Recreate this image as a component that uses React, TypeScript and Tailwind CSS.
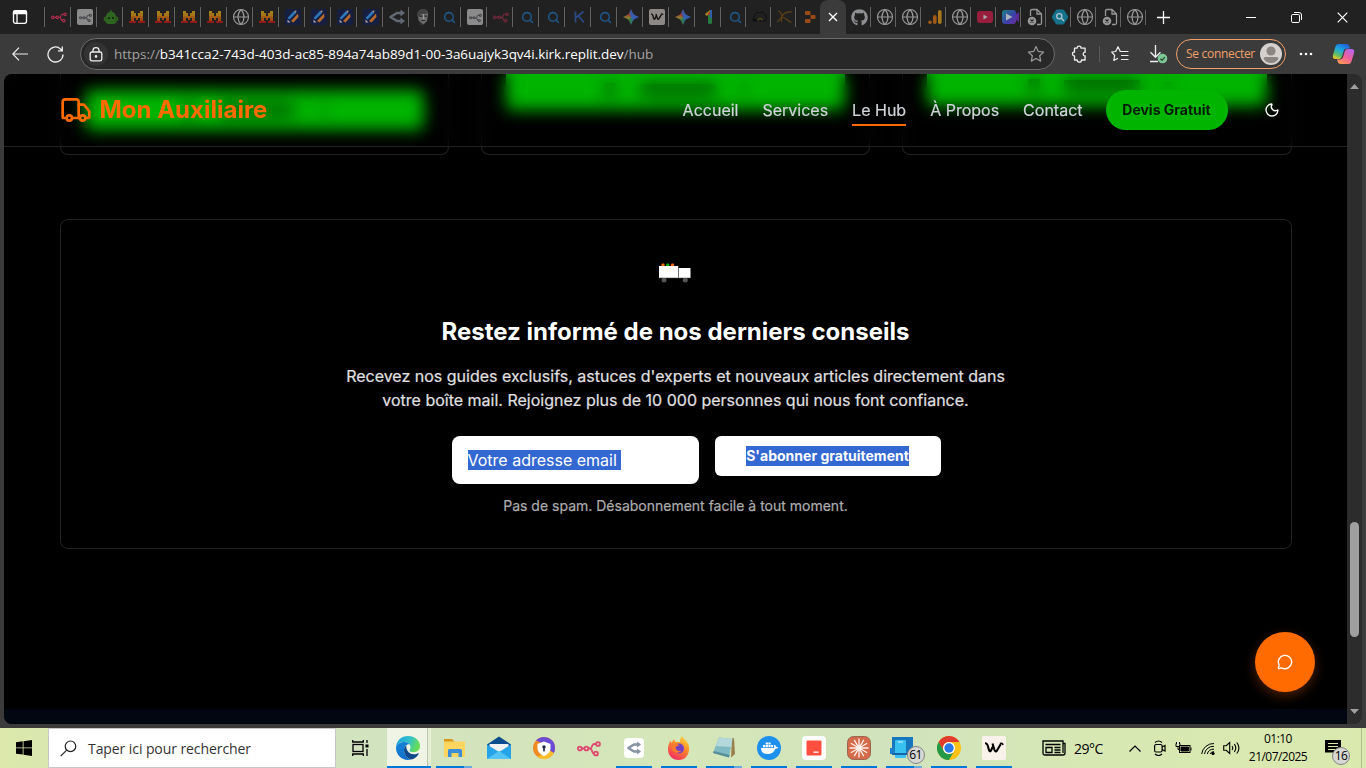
import React from "react";
import { Truck, Moon, MessageCircle, Search, Globe } from "lucide-react";
import { FaGithub } from "react-icons/fa";

/* ---------- Tab favicons ---------- */

const Nodes = ({ color, size = 16 }: { color: string; size?: number }) => (
  <svg width={size} height={size} viewBox="0 0 24 24" fill="none" stroke={color} strokeWidth="1.9">
    <circle cx="2.8" cy="12.5" r="1.9" />
    <circle cx="9.4" cy="12.5" r="1.9" />
    <circle cx="21" cy="8" r="1.9" />
    <circle cx="19" cy="17.5" r="1.9" />
    <path d="M4.7 12.5h2.8M11.3 12.5h2M13 12.5c2.500 0 1.500-4.500 4-4.500h2M13 12.500c2.500 0 1.500 5 4 5" />
  </svg>
);

const NodesTile = () => (
  <span className="flex size-4 items-center justify-center rounded-xs bg-[#8b8b8b]">
    <Nodes color="#454549" size={13} />
  </span>
);

const Robot = () => (
  <svg width="16" height="16" viewBox="0 0 16 16" fill="#2c6420">
    <path d="M7.300 3V1h1.400v2zM3 8a5 5.500 0 0 1 10 0zM0.800 8h1.500v4H0.800zM13.700 8h1.500v4h-1.500zM2.500 7h11v6.500l-2.500 1.500H5l-2.500-1.500z" />
    <path d="M5 8h2v2H5zM9 8h2v2H9z" fill="#16300f" />
  </svg>
);

const Mistral = () => (
  <svg width="16" height="16" viewBox="0 0 16 16" shapeRendering="crispEdges">
    <path d="M2 2h3v3H2zM11 2h3v3h-3z" fill="#a5811c" />
    <path d="M2 4h5v3H2zM9 4h5v3H9z" fill="#a5751a" />
    <path d="M2 7h12v2H2z" fill="#a35c14" />
    <path d="M2 9h3v3H2zM7 9h2v2H7zM11 9h3v3h-3z" fill="#a04a15" />
    <path d="M0 12h7v2H0zM9 12h7v2H9z" fill="#8f1a1a" />
  </svg>
);

const World = () => <Globe size={18} strokeWidth={1.5} color="#9a9a9a" className="-ml-px shrink-0" />;

const Stripes = () => (
  <svg width="16" height="16" viewBox="0 0 16 16">
    <rect width="16" height="16" rx="1" fill="#161f42" />
    <path d="M2.500 9 9 2l2 2-6.500 6.500z" fill="#2f76b8" />
    <path d="M6 12 13 4.500l.5 3.500L8.500 13.500z" fill="#b86a2c" />
    <path d="M2.500 10.500 5.500 13.500h-3z" fill="#a8a8b0" />
    <path d="m9 2 2.500-.5L11 4z" fill="#b89a90" />
  </svg>
);

const Fork = ({ color = "#626a75", size = 16 }: { color?: string; size?: number }) => (
  <svg width={size} height={size} viewBox="0 0 16 16" fill="none" stroke={color} strokeWidth="2.600">
    <path d="M12.500 4H8L1.500 8 8 12h4.500" strokeLinejoin="round" />
    <path d="m11.500 0.600 4.500 3.400-4.500 3.400zM11.500 8.600l4.500 3.400-4.500 3.400z" fill={color} stroke="none" />
  </svg>
);

const Face = () => (
  <svg width="16" height="16" viewBox="0 0 16 16">
    <path d="M2.500 6c0-3.500 2-5.500 5.500-5.500S13.500 2.500 13 6l-1 6-3.500 3.500L4 12.500z" fill="#6d6d6d" />
    <path d="M2.500 7V3L6 .5h4L13 4l-2 1H6L4 8z" fill="#424242" />
    <path d="M4.500 6.500h3v1.300h-3zM9 6.500h3v1.300H9zM6.500 11h3.500v1H6.500z" fill="#272727" />
    <path d="M8 5h1l.5 5H8z" fill="#9c9c9c" />
    <path d="M4 11.500 8.500 16H5z" fill="#333" />
  </svg>
);

const Find = () => <Search size={13} strokeWidth={2.800} color="#1d5688" className="ml-0.5" />;

const LetterK = () => (
  <svg width="16" height="16" viewBox="0 0 16 16" fill="none" stroke="#2b4a86" strokeWidth="1.700">
    <path d="M4.500 2.500v11M12.500 2.500 4.500 9M7.500 7l5.500 6.500" />
  </svg>
);

const Spark = () => (
  <span className="size-4 bg-[conic-gradient(#3b5aa6_0deg,#345fb4_120deg,#2f7a4f_190deg,#8a7a2c_260deg,#a03a38_320deg,#3b5aa6_360deg)] [clip-path:polygon(50%_0,62%_27%,73%_38%,100%_50%,73%_62%,62%_73%,50%_100%,38%_73%,27%_62%,0_50%,27%_38%,38%_27%)]" />
);

const Zigzag = ({ size = 16 }: { size?: number }) => (
  <svg width={size} height={size} viewBox="0 0 24 24" fill="none" stroke="currentColor">
    <path d="M3 7.300c1.800 0 2.200.7 2.700 2.200l1.300 4.500c.5 1.700 1.300 1.700 2 .5l2.200-4.500" strokeWidth="2.100" />
    <path d="m10.500 7.500 2 6.500c.6 1.700 1.600 1.700 2.500.5l3.800-6.500" strokeWidth="2.100" />
    <path d="M18 7.500q2.500-1 3 1.500" strokeWidth="1.600" />
  </svg>
);

const ZigzagTile = () => (
  <span className="flex size-4 items-center justify-center rounded-xs bg-[#8d8986] text-[#111]">
    <Zigzag size={16} />
  </span>
);

const DigitOne = () => (
  <svg width="16" height="16" viewBox="0 0 16 16">
    <path d="M4 5 9 1l1 3.500L5.500 7z" fill="#a8821b" />
    <path d="M7 4.500 10.500 1v7H7z" fill="#9b352c" />
    <path d="M7 6h4v7.500q0 1.500-2 1.500t-2-1.500z" fill="#277a3e" />
    <path d="M9 1h2v8H9z" fill="#315ea8" />
  </svg>
);

const Helmet = () => (
  <svg width="16" height="16" viewBox="0 0 16 16" fill="none" stroke="#111">
    <path d="m1 10 3-6 7-1 3 4v5H8" />
    <path d="M1 10h4v2H1z" fill="#111" />
    <path d="m5 11 3-1.500 2 .5v1.500" stroke="#5b5315" />
  </svg>
);

const Arcs = () => (
  <svg width="16" height="16" viewBox="0 0 16 16" fill="none" stroke="#5e4315" strokeWidth="1.200">
    <path d="M1 2c4 1 5 5 3 11M15 3C9 2 6 5 4.500 8c4 0 5.500 4 10 5.500M0 13 5 8" />
  </svg>
);

const Replit = ({ color = "#9a4a17" }) => (
  <svg width="16" height="16" viewBox="0 0 16 16" fill={color}>
    <rect x="3" y="2" width="5.500" height="4" rx=".8" />
    <rect x="8.500" y="6" width="5" height="4" rx=".8" />
    <rect x="3" y="10" width="5.500" height="4" rx=".8" />
  </svg>
);

const Analytics = () => (
  <svg width="16" height="16" viewBox="0 0 16 16">
    <rect x="11" y="1" width="3.600" height="14" rx="1.800" fill="#a8771a" />
    <rect x="6" y="6" width="3.600" height="9" rx="1.800" fill="#a05a15" />
    <circle cx="3" cy="13.200" r="1.800" fill="#a05a15" />
  </svg>
);

const Video = () => (
  <svg width="16" height="16" viewBox="0 0 16 16">
    <rect y="2" width="16" height="12" rx="3" fill="#971e3c" />
    <path d="M6.500 5.500v5l4-2.500z" fill="#aaa" />
  </svg>
);

const Camera = () => (
  <svg width="17" height="16" viewBox="0 0 17 16">
    <defs>
      <linearGradient id="cam" x2="1" y2="1">
        <stop stopColor="#1c8187" />
        <stop offset=".6" stopColor="#3c3fa8" />
        <stop offset="1" stopColor="#6f2da0" />
      </linearGradient>
    </defs>
    <path d="m11 7 6-4v10l-6-4z" fill="#5a2a96" />
    <rect y="1" width="14" height="14" rx="3" fill="url(#cam)" />
    <path d="M4 4.500v7L10.500 8z" fill="#a9b4bd" />
  </svg>
);

const BrokenPage = () => (
  <svg width="16" height="18" viewBox="0 0 16 18" fill="none" stroke="#979797" strokeWidth="1.300">
    <path d="M3.500 8V3q0-1.500 1.500-1.500h5L14.500 6v9q0 1.500-1.500 1.500h-3M10 1.500V6h4.500" />
    <circle cx="5" cy="13" r="4.300" fill="#979797" stroke="none" />
    <path d="m3.500 11.500 3 3m0-3-3 3" stroke="#222" strokeWidth="1.100" />
  </svg>
);

const HexFind = () => (
  <svg width="16" height="16" viewBox="0 0 16 16">
    <path d="M4.500 1h7L16 8l-4.500 7h-7L0 8z" fill="#16728c" stroke="#16728c" strokeLinejoin="round" />
    <circle cx="7.300" cy="7.300" r="2.600" fill="none" stroke="#b0c4ca" strokeWidth="1.300" />
    <path d="m9.300 9.300 2.700 2.700" stroke="#b0c4ca" strokeWidth="1.400" />
  </svg>
);

const wideTabs: React.ReactNode[] = [
  <Nodes color="#a62d4c" />, <NodesTile />, <Robot />, <Mistral />, <Mistral />, <Mistral />, <Mistral />,
  <World />, <Mistral />, <Stripes />, <Stripes />, <Stripes />, <Stripes />, <Fork />, <Face />, <Find />,
  <NodesTile />, <Nodes color="#70283a" />, <Find />, <Find />, <LetterK />, <Find />, <Spark />,
  <ZigzagTile />, <Spark />, <DigitOne />,
];
const narrowTabs: React.ReactNode[] = [<Find />, <Helmet />, <Arcs />, <Replit />];
const rightTabs: React.ReactNode[] = [
  <World />, <World />, <Analytics />, <World />, <Video />, <Camera />, <BrokenPage />, <HexFind />,
  <World />, <BrokenPage />, <World />,
];

function Tab({ wide, children }: { wide?: boolean; children: React.ReactNode }) {
  return (
    <div className={wide ? "flex h-5 w-[26px] shrink-0 items-center border-l border-[#626262] pl-1.5" : "flex h-5 w-[25px] shrink-0 items-center border-l border-[#626262] pl-1.5"}>
      {children}
    </div>
  );
}

function TabStrip() {
  return (
    <div className="flex h-[34px] items-center bg-[#212121] text-white">
      <div className="flex w-11 shrink-0 pl-3">
        <svg width="16" height="16" viewBox="0 0 16 16" fill="none" stroke="white" strokeWidth="1.300">
          <rect x="1.500" y="1.700" width="13" height="12.600" rx="2" />
          <path d="M1.500 4.500V3.500q0-1.800 1.800-1.800h9.400q1.800 0 1.800 1.800v1z" fill="white" />
          <path d="M5 4.500v9.500" />
        </svg>
      </div>
      {wideTabs.map((t, i) => <Tab wide key={i}>{t}</Tab>)}
      {narrowTabs.map((t, i) => <Tab key={i}>{t}</Tab>)}
      <div className="flex h-[34px] w-[26px] shrink-0 items-center justify-center rounded-t-lg bg-[#3b3b3b]">
        <svg width="10" height="10" viewBox="0 0 10 10" stroke="white" strokeWidth="1.400"><path d="m1 1 8 8m0-8L1 9" /></svg>
      </div>
      <div className="flex w-6 shrink-0 pl-[5px]"><FaGithub size={17} color="#8d8f92" /></div>
      {rightTabs.map((t, i) => <Tab key={i}>{t}</Tab>)}
      <div className="flex flex-1 items-center justify-between border-l border-[#626262] pr-[18px] pl-[10px]">
        <svg width="15" height="15" viewBox="0 0 15 15" stroke="white" strokeWidth="1.300"><path d="M7.500 1v13M1 7.500h13" /></svg>
        <div className="flex items-center gap-[35px]">
          <svg width="10" height="10" viewBox="0 0 10 10" stroke="white"><path d="M0 5.500h10" /></svg>
          <svg width="11" height="11" viewBox="0 0 11 11" fill="none" stroke="white"><rect x=".5" y="2.500" width="8" height="8" rx="1.300" /><path d="M3 .5h5q2.500 0 2.500 2.500v5" /></svg>
          <svg width="11" height="11" viewBox="0 0 11 11" stroke="white" strokeWidth="1.200"><path d="m.7.700 9.600 9.600m0-9.600L.7 10.300" /></svg>
        </div>
      </div>
    </div>
  );
}

function Toolbar() {
  return (
    <div className="flex h-10 items-center bg-[#3b3b3b] text-white">
      <div className="flex w-20 shrink-0 items-center gap-[19px] pl-3">
        <svg width="16" height="14" viewBox="0 0 16 14" fill="none" stroke="#eee" strokeWidth="1.200"><path d="M7 .7.800 7 7 13.300M1 7h15" /></svg>
        <svg width="17" height="17" viewBox="0 0 17 17" fill="none" stroke="#eee" strokeWidth="1.300"><path d="M16 8.500a7.500 7.500 0 1 1-2.500-5.600L15 4.300M15.300.5v4.300H11" /></svg>
      </div>
      <div className="flex h-8 w-[975px] shrink-0 items-center rounded-full border border-[#6b6b6b] bg-[#282828]">
        <div className="ml-[3px] flex size-6 items-center justify-center rounded-full bg-[#333]">
          <svg width="14" height="15" viewBox="0 0 14 15" fill="none" stroke="#eee" strokeWidth="1.300"><rect x="1.200" y="5" width="11.600" height="8.800" rx="1.700" /><path d="M4 5V3.500a3 2.800 0 0 1 6 0V5" /><circle cx="7" cy="9.400" r=".7" fill="#eee" /></svg>
        </div>
        <div className="ml-1.5 flex-1 font-['Open_Sans','Noto_Sans',sans-serif] text-[13.5px] tracking-[-0.030px] whitespace-nowrap text-[#a3a3a3]">
          https://<span className="text-white">b341cca2-743d-403d-ac85-894a74ab89d1-00-3a6uajyk3qv4i.kirk.replit.dev</span>/hub
        </div>
        <svg className="mr-[9px]" width="18" height="18" viewBox="0 0 18 18" fill="none" stroke="#9a9a9a" strokeWidth="1.200"><path d="m9 1.500 2.300 4.900 5.300.700-3.900 3.700 1 5.300L9 13.500l-4.700 2.600 1-5.300L1.400 7.100l5.300-.7z" strokeLinejoin="round" /></svg>
      </div>
      <div className="flex flex-1 items-center">
        <svg className="ml-4" width="17" height="18" viewBox="0 0 17 18" fill="none" stroke="#eee" strokeWidth="1.300"><path d="M3.500 3.200h2.600a2 2 0 0 1 4 0h4v4a1.800 1.800 0 1 0 0 3.800v4h-3.600a2 2 0 0 1-4.400 0H3.500V11a2 2 0 0 1 0-4z" strokeLinejoin="round" /></svg>
        <div className="ml-[11px] h-4 w-px bg-[#5d5d5d]" />
        <svg className="ml-[11px]" width="18" height="18" viewBox="0 0 18 18" fill="none" stroke="#eee" strokeWidth="1.200"><path d="M11 6.500H9.300L7 1.700 4.700 6.500l-4 .5 3 3.300-.9 5.200L7 13.200M11 6.500h6.500M10 10.500h7.500M10 14.500h7.500" strokeLinejoin="round" /></svg>
        <svg className="ml-5" width="19" height="20" viewBox="0 0 19 20" fill="none" stroke="#eee" strokeWidth="1.300"><path d="M6.500 1v12M1.500 8.300l5 5 5-5M1 17.500h8" /><circle cx="13.500" cy="14.500" r="4.800" fill="#7cc795" stroke="none" /><path d="m11.300 14.700 1.700 1.700 2.800-3.300" stroke="#26492f" /></svg>
        <div className="ml-[8px] flex h-[30px] w-[110px] items-center justify-between rounded-full border border-[#f2a169] pr-[3px] pl-[9px]">
          <span className="font-['Open_Sans','Noto_Sans',sans-serif] text-[12px] tracking-[-0.300px] whitespace-nowrap text-[#f2a169]">Se connecter</span>
          <svg width="22" height="22" viewBox="0 0 22 22"><circle cx="11" cy="11" r="11" fill="#d5d1ce" /><circle cx="11" cy="8" r="4.600" fill="#8c8683" /><path d="M3.500 15.500q0-1.500 2-1.500h11q2 0 2 1.500c-1 2.500-4 4.500-7.500 4.500s-6.500-2-7.500-4.500" fill="#8c8683" /></svg>
        </div>
        <svg className="ml-[13px]" width="14" height="4" viewBox="0 0 14 4" fill="white"><circle cx="2" cy="2" r="1.300" /><circle cx="7" cy="2" r="1.300" /><circle cx="12" cy="2" r="1.300" /></svg>
        <svg className="ml-[19px]" width="23" height="22" viewBox="0 0 23 22">
          <defs>
            <linearGradient id="cpa" x1=".7" x2=".2" y2="1"><stop stopColor="#2262dc" /><stop offset=".4" stopColor="#19a9e4" /><stop offset=".75" stopColor="#5bbc66" /><stop offset="1" stopColor="#f1c62a" /></linearGradient>
            <linearGradient id="cpb" x1=".8" x2=".2" y2="1"><stop stopColor="#b765ee" /><stop offset=".5" stopColor="#ee5f9c" /><stop offset="1" stopColor="#ff9a50" /></linearGradient>
          </defs>
          <path d="M6.500 1h8q2 0 2.700 2l.8 2.500h-3.500q-2 0-2.700 2l-2 6.500q-.7 2-2.500 2H3.500Q0 16 1 12l2.500-8.500Q4.300 1 6.500 1" fill="url(#cpa)" />
          <path d="M15.500 6h4q3.500 0 2.500 4l-2.500 8.500Q18.700 21 16.500 21h-8q-2 0-2.700-2L5 16.500h3.200q2 0 2.700-2l2-6.500q.7-2 2.600-2" fill="url(#cpb)" />
        </svg>
      </div>
    </div>
  );
}

/* ---------- Web page ---------- */

const cards = [
  { offset: "mt-4", lead: "ml-[98px]" },
  { offset: "-mt-1", lead: "ml-[98px]" },
  { offset: "-mt-2", lead: "ml-[101px]" },
];

function Site() {
  return (
    <div className="relative flex-1 overflow-hidden rounded-l-lg bg-black font-['Inter',sans-serif] text-white">
      <div className="mx-auto grid h-[81px] max-w-7xl grid-cols-3 gap-8 px-6">
        {cards.map((c, i) => (
          <div key={i} className="flex items-start rounded-b-lg border border-t-0 border-[#222] px-6">
            <div className={`flex h-10 w-full items-center rounded-md bg-[#00b400] ${c.offset}`}>
              <span className={`h-3.5 w-3 bg-black/40 ${c.lead}`} />
              <span className="ml-6 h-3 w-[76px] bg-black/50" />
              <span className="ml-6 h-2 w-2 bg-black/30" />
            </div>
          </div>
        ))}
      </div>

      <header className="absolute inset-x-0 top-0 border-b border-[#222] backdrop-blur-[8px]">
        <div className="mx-auto flex h-[72px] max-w-7xl items-center justify-between px-6">
          <div className="flex items-center gap-2 text-[#ff6b00]">
            <Truck size={32} />
            <span className="text-2xl font-bold whitespace-nowrap">Mon Auxiliaire</span>
          </div>
          <nav className="flex items-center gap-6 whitespace-nowrap text-[#d1d5db] [-webkit-text-stroke:0.2px]">
            <span>Accueil</span>
            <span>Services</span>
            <span className="relative">Le Hub<i className="absolute inset-x-0 -bottom-1 h-0.5 bg-[#ff6b00]" /></span>
            <span>À Propos</span>
            <span>Contact</span>
            <span className="-ml-px flex h-10 w-[122px] items-center justify-center rounded-full bg-[#00b400] text-sm font-bold text-[#031c03] [-webkit-text-stroke:0]">Devis Gratuit</span>
            <span className="flex size-10 items-center justify-center text-white"><Moon size={16} /></span>
          </nav>
        </div>
      </header>

      <div className="mx-auto mt-16 max-w-7xl px-6">
        <section className="flex h-[330px] flex-col items-center rounded-lg border border-[#222] pt-8">
          <svg width="48" height="48" viewBox="0 0 48 48">
            <rect x="9.500" y="11.500" width="3" height="3" rx="1" fill="#ff6b00" />
            <rect x="14.200" y="11.500" width="3" height="3" rx="1" fill="#00b400" />
            <rect x="19" y="11.500" width="3" height="3" rx="1" fill="#ff6b00" />
            <circle cx="12" cy="28" r="2.500" fill="#555" />
            <circle cx="33.300" cy="28" r="2.500" fill="#555" />
            <rect x="7" y="25" width="31.500" height="1.200" fill="#555" />
            <rect x="7" y="14" width="19.200" height="11.700" fill="#fff" />
            <rect x="26.700" y="16" width="11.800" height="9.700" fill="#fff" />
          </svg>
          <h2 className="mt-4 text-2xl font-bold">Restez informé de nos derniers conseils</h2>
          <p className="mt-4 text-center whitespace-nowrap text-[#e0e0e0] [-webkit-text-stroke:0.2px]">
            Recevez nos guides exclusifs, astuces d'experts et nouveaux articles directement dans
            <br />
            votre boîte mail. Rejoignez plus de 10 000 personnes qui nous font confiance.
          </p>
          <div className="mt-6 flex w-[448px] items-start gap-4">
            <div className="flex h-12 w-[247px] shrink-0 items-center rounded-lg bg-white pl-4">
              <span className="h-5 w-[153px] bg-[#3367d1] leading-5 whitespace-nowrap">Votre adresse email</span>
            </div>
            <div className="flex h-10 w-[226px] shrink-0 items-center justify-center rounded-md bg-white">
              <span className="h-5 bg-[#3367d1] text-sm font-bold whitespace-nowrap">S'abonner gratuitement</span>
            </div>
          </div>
          <p className="mt-3 text-sm text-[#adadad] [-webkit-text-stroke:0.2px]">Pas de spam. Désabonnement facile à tout moment.</p>
        </section>
      </div>
      <div className="mt-40 h-4 bg-[#020610]" />

      <div className="absolute right-8 bottom-8 flex size-[60px] items-center justify-center rounded-full bg-[#ff6b00] shadow-[0_4px_12px_rgba(255,107,0,0.3)]">
        <MessageCircle size={16} />
      </div>
    </div>
  );
}

function Scrollbar() {
  return (
    <div className="flex w-[15px] flex-col items-center rounded-r-lg bg-[#2c2c2c]">
      <svg className="mt-[10px]" width="9" height="5" viewBox="0 0 9 5" fill="#9f9f9f"><path d="M0 5 4.500 0 9 5z" /></svg>
      <div className="mt-[433px] h-[115px] w-[9px] rounded-full bg-[#9f9f9f]" />
      <svg className="mt-[72px]" width="9" height="5" viewBox="0 0 9 5" fill="#9f9f9f"><path d="m0 0 4.500 5L9 0z" /></svg>
    </div>
  );
}

/* ---------- Taskbar ---------- */

const Edge = () => (
  <svg width="24" height="24" viewBox="0 0 24 24">
    <defs>
      <linearGradient id="e1" x2="1" y2=".3"><stop stopColor="#1a9be0" /><stop offset=".6" stopColor="#33c3c8" /><stop offset="1" stopColor="#67dd55" /></linearGradient>
      <linearGradient id="e2" x2=".6" y2="1"><stop stopColor="#1686d8" /><stop offset="1" stopColor="#1170cc" /></linearGradient>
    </defs>
    <path d="M0 11C.5 4.500 5.500 0 12 0c7 0 12 4.500 12 10 0 4-3 6.200-6.500 6.200-2.800 0-4-1-4-2 0-.8 1-1.200 1-3C14.500 8.500 12 6 8.500 6 4.500 6 1 8 0 11" fill="url(#e1)" />
    <path d="M0 12c0-3.500 4-6 8.500-6 2.500 0 4.300 1 5.200 2.300C10.500 8 8 10.500 8 14c0 4.500 3 8.500 7 9.600-1 .3-2 .4-3 .4C5.500 24 0 18.500 0 12" fill="url(#e2)" />
    <path d="M8 14c0-2 1-3.800 2.500-4.800-.8 4.300 2 9 7.500 9 2 0 3.300-.6 4.300-1 .4-.1.700.2.500.6C21 21 18 23.400 15 23.600 11 22.500 8 18.500 8 14" fill="#114a8b" />
  </svg>
);

const Explorer = () => (
  <svg width="24" height="24" viewBox="0 0 24 24">
    <path d="M2 3h8l2 2v3H2z" fill="#d99a1c" />
    <path d="M2 5.500h21V21H2z" fill="#ffd560" />
    <path d="M6 21v-6.500q0-1.500 1.500-1.500h11q1.500 0 1.500 1.500V21h-3.500v-4h-7v4z" fill="#3a8dd6" />
  </svg>
);

const Mail = () => (
  <svg width="24" height="24" viewBox="0 0 24 24">
    <path d="M0 8.500 12 .500l12 8V12H0z" fill="#0c4c8c" />
    <path d="M2.500 8h19v7h-19z" fill="#f2f2f2" />
    <path d="M0 8.500 12 16 24 8.500V23H0z" fill="#27a4e8" />
    <path d="m0 23 12-8 12 8z" fill="#54c4f5" />
  </svg>
);

const Shield = () => (
  <svg width="24" height="24" viewBox="0 0 24 24">
    <circle cx="12" cy="12" r="11" fill="#f28a22" />
    <path d="M4 4.500A11 11 0 0 1 23 12c0 2-.5 4-1.500 5.500L12 8z" fill="#6b4cd6" />
    <path d="M5 20.500A11 11 0 0 0 22 17l-4-2-8 4z" fill="#fcbf2d" />
    <path d="M12 5.500 18.500 8v4c0 4-3 6.500-6.500 8-3.500-1.500-6.500-4-6.500-8V8z" fill="#fff" />
    <circle cx="12" cy="11" r="1.700" fill="#222846" />
    <path d="M11.200 11h1.600v4.500h-1.600z" fill="#222846" />
  </svg>
);

const ForkTile = () => (
  <span className="flex size-5 items-center justify-center rounded-sm bg-white"><Fork color="#8492a4" size={14} /></span>
);

const Firefox = () => (
  <svg width="24" height="24" viewBox="0 0 24 24">
    <defs><linearGradient id="ff" x1=".8" x2=".3" y2="1"><stop stopColor="#ffdc3c" /><stop offset=".45" stopColor="#ff8a2a" /><stop offset="1" stopColor="#f02c65" /></linearGradient></defs>
    <path d="M15 0c.5 2 4 4 6 7.500 3 5 .5 16.500-9 16.500C5 24 1 19 1 13.500c0-4 1-6.500 2.500-9l1 2.500L7 3l1.500 3L13 6c0-3 1-5 2-6" fill="url(#ff)" />
    <circle cx="12" cy="12.500" r="5" fill="#7340c4" />
    <path d="M4.500 8.500c3-2 6-1 8 1-2 0-2 1-4 1.500 0 3 3 5 6 3.500-1.500 3-8 3-9.500-1z" fill="#ff7a2c" />
  </svg>
);

const Notepad = () => (
  <svg width="24" height="24" viewBox="0 0 24 24">
    <path d="m20 2 2 .500L23 18l-4 3.500z" fill="#9a7f4e" />
    <path d="M7 1.500 20.500 3 17 21.500 1 17z" fill="#7fb9c2" />
    <path d="M7 1.500 20.500 3 19 11 4 10z" fill="#b4d9dc" />
    <path d="m1 17 16 4.500.500-2.500L1.800 15z" fill="#568e98" />
  </svg>
);

const Docker = () => (
  <svg width="24" height="24" viewBox="0 0 24 24">
    <circle cx="12" cy="12" r="12" fill="#1d90ee" />
    <path d="M4 12h13c.3-1 .2-1.800-.2-2.500l.8-.7c1 .7 1.200 1.300 1.300 2 1-.2 1.800 0 2.300.4-.5 1.200-1.500 1.500-2.700 1.500-1.500 3.500-4 5.300-8 5.300-4.300 0-6.500-2-6.500-6" fill="#fff" />
    <path d="M6 9h2.200v2.200H6zM8.700 9h2.200v2.200H8.700zM11.400 9h2.200v2.200h-2.200zM14.100 9h1.900v2.200h-1.900zM8.700 6.500h2.200v2.100H8.700zM11.400 6.500h2.200v2.100h-2.200z" fill="#fff" />
  </svg>
);

const RedTile = () => (
  <svg width="24" height="24" viewBox="0 0 24 24"><rect width="24" height="24" rx="4" fill="#fff" /><rect x="4.500" y="4.500" width="15" height="15" rx="1" fill="#ff4f3e" /><path d="M11.500 15.500h5v1.300h-5z" fill="#fff" /></svg>
);

const Burst = () => (
  <svg width="24" height="24" viewBox="0 0 24 24">
    <rect x=".5" y=".5" width="23" height="23" rx="6" fill="#d66b4c" stroke="#9a6650" />
    <path d="M12 2.500v19M2.500 12h19M7.200 3.800l9.600 16.400M16.800 3.800 7.200 20.200M3.800 7.200l16.400 9.600M3.800 16.800l16.400-9.600" stroke="#fff1e8" strokeWidth="1.300" />
  </svg>
);

const Count = ({ n }: { n: string }) => (
  <span className="absolute flex size-[18px] items-center justify-center rounded-full border border-[#848484] bg-[#d7d7d3] font-['Open_Sans','Noto_Sans',sans-serif] text-[12px] font-medium tracking-[-0.600px] text-black">{n}</span>
);

const Phone = () => (
  <span className="relative -ml-1 flex size-6">
    <svg width="24" height="24" viewBox="0 0 24 24"><path d="M2 1h21v16H2z" fill="#1676be" /><path d="M0 12h5v6H0z" fill="#1b80c7" /><rect x="5" y="4" width="11" height="18" rx="1" fill="#36c1f1" /><path d="M2 17h18v2H2z" fill="#1764a8" /><path d="M8 6h5" stroke="#d6f5ff" /></svg>
    <span className="absolute top-2.5 left-[17px]"><Count n="61" /></span>
  </span>
);

const Chrome = () => (
  <svg width="24" height="24" viewBox="0 0 24 24">
    <circle cx="12" cy="12" r="12" fill="#fbc116" />
    <path d="M1.600 6A12 12 0 0 1 22.400 6H12a6 6 0 0 0-5.200 9z" fill="#e33b2e" />
    <path d="M1.600 6A12 12 0 0 0 12 24l5.200-9a6 6 0 0 1-10.400 0z" fill="#249a48" />
    <circle cx="12" cy="12" r="6" fill="#fff" />
    <circle cx="12" cy="12" r="4.700" fill="#2a78e8" />
  </svg>
);

const W = () => (
  <span className="flex size-6 items-center justify-center rounded-xs bg-[#f9f2ea] text-black"><Zigzag size={24} /></span>
);

const apps: { icon: React.ReactNode; bar: boolean; multi?: boolean }[] = [
  { icon: <Explorer />, bar: true, multi: true },
  { icon: <Mail />, bar: false },
  { icon: <Shield />, bar: false },
  { icon: <Nodes color="#dd4b70" size={24} />, bar: false },
  { icon: <ForkTile />, bar: true },
  { icon: <Firefox />, bar: true },
  { icon: <Notepad />, bar: true, multi: true },
  { icon: <Docker />, bar: true },
  { icon: <RedTile />, bar: true },
  { icon: <Burst />, bar: true },
  { icon: <Phone />, bar: true, multi: true },
  { icon: <Chrome />, bar: true },
  { icon: <W />, bar: true },
];

function Taskbar() {
  return (
    <div className="flex h-10 bg-[linear-gradient(90deg,#dce8ab_0%,#d7e6b4_8%,#d2e3c0_26%,#d5e6b8_50%,#d1e3bd_66%,#d7e8b3_80%,#dae9ae_100%)] font-['Open_Sans','Noto_Sans',sans-serif] text-black">
      <div className="flex w-12 shrink-0 items-center justify-center">
        <svg width="16" height="16" viewBox="0 0 16 16"><path d="M0 2.300 6.700 1.300v6.200H0zM7.500 1.200 16 0v7.500H7.500zM0 8.300h6.700v6.300L0 13.700zM7.500 8.300H16V16l-8.500-1.200z" /></svg>
      </div>
      <div className="flex w-[288px] shrink-0 items-center border border-[#c4c7c4] bg-white pl-[11px]">
        <svg width="17" height="17" viewBox="0 0 17 17" fill="none" stroke="#222" strokeWidth="1.200"><circle cx="10.500" cy="6.300" r="5.300" /><path d="M6.700 10.200.7 16.200" /></svg>
        <span className="ml-[11px] text-[14px] tracking-[-0.080px] whitespace-nowrap text-[#333]">Taper ici pour rechercher</span>
      </div>
      <div className="flex w-[51px] shrink-0 items-center pl-4">
        <svg width="17" height="16" viewBox="0 0 17 16" fill="none" stroke="black" strokeWidth="1.300"><rect x="1" y="4.500" width="10" height="7" /><path d="M.7 0v2h10.600V0M.7 16v-2h10.600v2M15 0v3M15 9v7" /><path d="M13.500 4.500h3v3h-3z" fill="black" stroke="none" /></svg>
      </div>
      <div className="flex w-11 shrink-0 flex-col border-b-2 border-[#0078d7]">
        <div className="flex h-[38px]">
          <div className="flex w-[41px] items-center justify-center border-r border-[#bbc8ab] bg-[#f0f4e5] pt-0.5 pl-0.5"><Edge /></div>
          <div className="w-[3px] bg-[#e5edd6]" />
        </div>
      </div>
      {apps.map((a, i) => (
        <div key={i} className="flex w-[45px] shrink-0 flex-col items-center">
          <div className="flex h-[38px] items-center pt-0.5">{a.icon}</div>
          {a.bar && (
            <div className="flex h-0.5 w-9 bg-[#0078d7]">
              {a.multi && <div className="ml-auto w-2 bg-[#69a9db]" />}
            </div>
          )}
        </div>
      ))}
      <div className="flex flex-1 items-center">
        <svg className="ml-[26px] shrink-0" width="24" height="16" viewBox="0 0 24 16" fill="none" stroke="black" strokeWidth="1.300"><path d="M21 3.500h2v9.500q0 2-2 2H3q-2 0-2-2V1h20v12" /><path d="M3.500 4.500h15M12.500 7.500h6M12.500 10h6M12.500 12.500h6M4 7.500h6v5H4z" /></svg>
        <span className="ml-2 w-[46px] shrink-0 text-[14px] tracking-[-0.500px]">29°C</span>
        <svg className="ml-[9px] shrink-0" width="12" height="7" viewBox="0 0 12 7" fill="none" stroke="black" strokeWidth="1.200"><path d="m.5 6.500 5.500-5.500 5.500 5.500" /></svg>
        <svg className="ml-[13px] shrink-0" width="12" height="16" viewBox="0 0 12 16" fill="none" stroke="black" strokeWidth="1.200"><rect x=".6" y="4.500" width="7.500" height="7.500" rx="1.500" /><path d="m8 7 3-1.500v5.500L8 9.500M1 2.500q3.500-3 7 0M1 14q3.500 3 7 0" /></svg>
        <svg className="ml-[9px] shrink-0" width="17" height="12" viewBox="0 0 17 12" fill="none" stroke="black"><rect x="4.500" y="3.500" width="10.500" height="7" /><path d="M6 5h7.500v4H6z" fill="black" /><path d="M16 5.500v3M1 1.500v3h4v-3M3 4.500v3h1.500M1.500 0v2M4.500 0v2" /></svg>
        <svg className="ml-[9px] shrink-0" width="14" height="13" viewBox="0 0 14 13" fill="none" stroke="black"><path d="M.7 12A12 12 0 0 1 13 1.500M3.500 12A9 9 0 0 1 13 4.300M6.300 12A6 6 0 0 1 13 7.200M9 12A4 4 0 0 1 13 9.700" /><circle cx="12" cy="11.500" r="1.200" fill="black" /></svg>
        <svg className="ml-2 shrink-0" width="17" height="14" viewBox="0 0 17 14" fill="none" stroke="black" strokeWidth="1.100"><path d="M.7 4.700h2.500L6.700 1.500v11L3.200 9.300H.7zM9 5q1.500 2 0 4M11.300 3.200q3 3.800 0 7.600M13.700 1.500q4.500 5.500 0 11" /></svg>
        <div className="ml-[8px] w-[60px] shrink-0 text-center text-[12px] leading-[18px] tracking-[-0.540px] whitespace-nowrap">
          01:10
          <br />
          21/07/2025
        </div>
        <div className="relative ml-[17px] h-[17px] w-4 shrink-0">
          <svg width="16" height="17" viewBox="0 0 16 17"><path d="M0 0h16v12.500h-4V16l-4-3.500H0z" /><path d="M3 3.500h10M3 6.500h10M3 9.500h7" stroke="#d9e8b0" strokeWidth="1.200" /></svg>
          <span className="absolute top-[7px] left-[7px]"><Count n="16" /></span>
        </div>
      </div>
      <div className="w-[5px] shrink-0 border-l border-[#aebb8d]" />
    </div>
  );
}

export default function App() {
  return (
    <div className="flex h-[768px] w-[1366px] flex-col overflow-hidden bg-[#3b3b3b]">
      <TabStrip />
      <Toolbar />
      <div className="flex h-[654px] px-1 pb-1">
        <Site />
        <Scrollbar />
      </div>
      <Taskbar />
    </div>
  );
}
